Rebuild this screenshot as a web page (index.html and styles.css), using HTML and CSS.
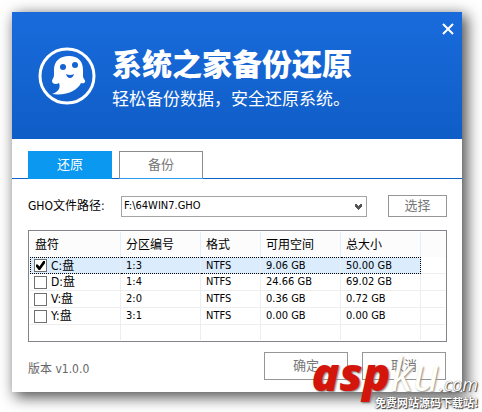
FILE: index.html
```html
<!DOCTYPE html>
<html lang="zh-CN">
<head>
<meta charset="utf-8">
<meta name="viewport" content="width=device-width, initial-scale=1">
<title>系统之家备份还原</title>
<link rel="stylesheet" href="styles.css">
</head>
<body>
<main class="dialog">
  <header class="banner">
    <svg class="logo" viewBox="0 0 58 58" aria-hidden="true">
      <circle cx="29" cy="29" r="27" fill="none" stroke="#fff" stroke-width="3"/>
      <path fill="#fff" d="M16 23C16 14 22 9 31 9C40 9 45 14 45 23V29C45 32 48 33 47 35C46 37 44 36 43 36C40 43 29 49 14 47C20 45 23 41 21 36C18 38 14 37 14 34C14 32 16 31 16 28Z"/>
      <circle cx="25" cy="20" r="3" fill="#1463d0"/>
      <circle cx="37" cy="18" r="3" fill="#1463d0"/>
      <path fill="#1463d0" d="M28 27Q32 29 36 27Q35 31 32 31Q29 31 28 27Z"/>
    </svg>
    <div class="heading">
      <h1 class="title">系统之家备份还原</h1>
      <p class="slogan">轻松备份数据，安全还原系统。</p>
    </div>
    <button class="close" type="button" aria-label="关闭">
      <svg viewBox="0 0 12 12" aria-hidden="true"><path d="M1 1L11 11M11 1L1 11" stroke="#fff" stroke-width="2"/></svg>
    </button>
  </header>

  <nav class="tabs">
    <button class="tab active" type="button">还原</button>
    <button class="tab" type="button">备份</button>
  </nav>

  <div class="content">
    <div class="path-row">
      <label class="path-label" for="path">GHO文件路径:</label>
      <div class="path-box">
        <select class="path-select" id="path"><option>F:\64WIN7.GHO</option></select>
        <svg class="arrow" viewBox="0 0 7 6" aria-hidden="true"><path d="M0 0H2V1H3V2H4V1H5V0H7V3H6V4H5V5H4V6H3V5H2V4H1V3H0Z" fill="#555"/></svg>
      </div>
      <button class="button browse" type="button">选择</button>
    </div>

    <div class="list">
      <table class="disks">
        <colgroup><col class="c-disk"><col class="c-part"><col class="c-format"><col class="c-size"><col class="c-size"><col></colgroup>
        <thead>
          <tr><th>盘符</th><th>分区编号</th><th>格式</th><th>可用空间</th><th>总大小</th><th></th></tr>
        </thead>
        <tbody>
          <tr class="selected"><td><label class="disk"><input class="check" type="checkbox" checked>C:盘</label></td><td>1:3</td><td>NTFS</td><td>9.06 GB</td><td>50.00 GB</td><td></td></tr>
          <tr><td><label class="disk"><input class="check" type="checkbox">D:盘</label></td><td>1:4</td><td>NTFS</td><td>24.66 GB</td><td>69.02 GB</td><td></td></tr>
          <tr><td><label class="disk"><input class="check" type="checkbox">V:盘</label></td><td>2:0</td><td>NTFS</td><td>0.36 GB</td><td>0.72 GB</td><td></td></tr>
          <tr><td><label class="disk"><input class="check" type="checkbox">Y:盘</label></td><td>3:1</td><td>NTFS</td><td>0.00 GB</td><td>0.00 GB</td><td></td></tr>
          <tr class="blank"><td></td><td></td><td></td><td></td><td></td><td></td></tr>
        </tbody>
      </table>
    </div>

    <footer class="footer">
      <span class="version">版本 v1.0.0</span>
      <button class="button" type="button">确定</button>
      <button class="button" type="button">取消</button>
    </footer>
  </div>
</main>

<div class="watermark">
  <div class="mark-name"><span class="mark-red">asp</span><span class="mark-white">ku</span><span class="mark-com">.com</span></div>
  <div class="mark-note">免费网站源码下载站!</div>
</div>
</body>
</html>
```

FILE: styles.css
```css
* {
  box-sizing: border-box;
}

body {
  margin: 0;
  padding: 12px 20px 20px 12px;
  position: relative;
  background: #fff;
  color: #000;
  font: 12px/16px "DejaVu Sans Condensed", "Noto Sans CJK SC", sans-serif;
}

button,
select {
  margin: 0;
  font: inherit;
}

.dialog {
  background: #fff;
  box-shadow: 4px 4px 14px 1px rgba(0, 0, 0, 0.7);
}

.banner {
  position: relative;
  display: flex;
  gap: 16px;
  padding: 32px 24px 32px 26px;
  height: 127px;
  background: linear-gradient(#196bdc, #0f5dc7);
  color: #fff;
}

.logo {
  flex: none;
  width: 58px;
  height: 58px;
  margin-top: 3px;
}

.title {
  margin: 0;
  font: 900 30px/36px "Noto Sans CJK SC", sans-serif;
  white-space: nowrap;
}

.slogan {
  margin: 8px 0 0;
  font: 17px/20px "Noto Sans CJK SC", sans-serif;
  white-space: nowrap;
}

.close {
  position: absolute;
  top: 10px;
  right: 7px;
  display: flex;
  padding: 1px;
  border: 0;
  background: none;
}

.close svg {
  width: 12px;
  height: 12px;
}

.tabs {
  display: flex;
  gap: 7px;
  padding: 12px 16px 0;
  border-bottom: 1px solid #0f62cc;
}

.tab {
  width: 84px;
  height: 28px;
  margin-bottom: -1px;
  padding: 0;
  border: 1px solid #8c8c8c;
  border-bottom-color: #2a9cf0;
  background: #fff;
  color: #777;
}

.tab.active {
  border-color: #0a98f0;
  background: #0a98f0;
  color: #fff;
}

.content {
  padding: 16px 15px 12px 16px;
}

.path-row {
  display: flex;
  align-items: center;
  height: 22px;
}

.path-label {
  width: 93px;
  white-space: nowrap;
}

.path-box {
  position: relative;
  flex: 1;
}

.path-select {
  display: block;
  appearance: none;
  width: 100%;
  height: 21px;
  padding: 0 20px 0 2px;
  border: 1px solid #a3a3a8;
  border-radius: 0;
  background: #fff;
  color: #000;
  font-size: 11px;
}

.arrow {
  position: absolute;
  right: 5px;
  top: 8px;
  width: 7px;
  height: 6px;
  pointer-events: none;
}

.tab,
.button {
  font-size: 13px;
}

.button {
  width: 84px;
  height: 28px;
  padding: 0;
  border: 1px solid #969696;
  background: #fff;
  color: #777;
}

.button.browse {
  width: 59px;
  height: 22px;
  margin-left: 21px;
}

.list {
  margin-top: 13px;
  padding: 1px;
  border: 1px solid #83838b;
}

.disks {
  width: 100%;
  table-layout: fixed;
  border-collapse: separate;
  border-spacing: 0;
}

.c-disk {
  width: 91px;
}

.c-part,
.c-size {
  width: 80px;
}

.c-format {
  width: 60px;
}

.disks th,
.disks td {
  padding: 0 0 0 5px;
  border-right: 1px solid #eee;
  text-align: left;
  font-weight: normal;
  white-space: nowrap;
}

.disks th {
  height: 25px;
  border-right-color: #e3eefb;
  background: #fcfcfd;
}

.disks td {
  height: 17px;
  border-bottom: 1px solid #eee;
  font-size: 11px;
  line-height: 14px;
}

.disks th:last-child,
.disks td:last-child {
  border-right: 0;
}

.disks .blank td {
  height: 15px;
  border-bottom: 0;
}

.disks .selected td:not(:last-child) {
  border-top: 1px dotted #000;
  border-bottom: 1px dotted #000;
  background: #dbecfd;
}

.disks .selected td:first-child {
  border-left: 1px dotted #000;
}

.disks .selected td:nth-child(5) {
  border-right: 1px dotted #000;
}

.disks td:first-child {
  padding-left: 4px;
}

.disks .selected td:first-child {
  padding-left: 3px;
}

.disk {
  display: flex;
  align-items: center;
  gap: 4px;
  font-size: 12px;
}

.check {
  appearance: none;
  width: 13px;
  height: 13px;
  margin: 0;
  border: 1px solid #707070;
  background: #fff;
}

.check:checked::before {
  content: "";
  display: block;
  width: 9px;
  height: 9px;
  margin: 1px;
  background: #000;
  clip-path: polygon(0 40%, 20% 40%, 38% 60%, 80% 0, 100% 0, 100% 25%, 45% 100%, 30% 100%, 0 65%);
}

.footer {
  display: flex;
  align-items: center;
  gap: 14px;
  margin-top: 10px;
  padding-right: 1px;
}

.version {
  flex: 1;
  padding-top: 6px;
  color: #666;
}

.watermark {
  position: absolute;
  right: 4px;
  bottom: 2px;
  color: #fff;
  white-space: nowrap;
  pointer-events: none;
}

.mark-name {
  margin-bottom: -12px;
  font: italic 300 46px/44px "Open Sans", sans-serif;
  text-align: right;
}

.mark-red {
  color: #d3150b;
  font-weight: 800;
  text-shadow: 1px 1px 2px #777;
}

.mark-white {
  color: #fffff8;
  font-weight: 400;
  text-shadow: 1px 1px 2px #888;
}

.mark-com {
  font-size: 18px;
  font-weight: 400;
  text-shadow: 1px 1px 1px #444, 0 0 1px #444;
}

.mark-note {
  position: relative;
  font: bold 11px/16px "Noto Sans CJK SC", sans-serif;
  text-align: right;
  text-shadow: 1px 1px 1px #333, 0 0 2px #444;
}
```
